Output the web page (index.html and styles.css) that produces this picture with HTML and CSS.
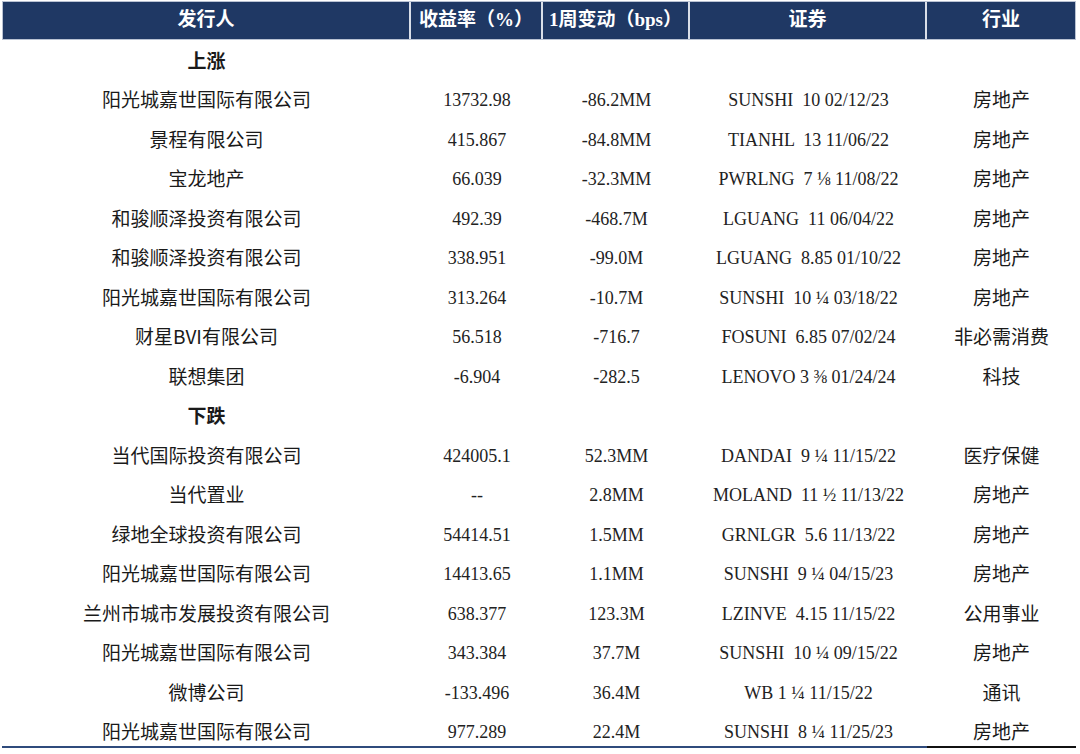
FILE: index.html
```html
<!DOCTYPE html>
<html lang="zh">
<head>
<meta charset="utf-8">
<title>发行人收益率变动</title>
<link rel="stylesheet" href="styles.css">
</head>
<body>
<div class="table">
  <div class="row head">
    <div class="cell c1">发行人</div>
    <div class="cell c2">收益率（%）</div>
    <div class="cell c3">1周变动（bps）</div>
    <div class="cell c4">证券</div>
    <div class="cell c5">行业</div>
  </div>
  <div class="body">
    <div class="row"><div class="cell c1 sect">上涨</div><div class="cell c2"></div><div class="cell c3"></div><div class="cell c4"></div><div class="cell c5"></div></div>
    <div class="row"><div class="cell c1">阳光城嘉世国际有限公司</div><div class="cell c2 num">13732.98</div><div class="cell c3 num">-86.2MM</div><div class="cell c4 num">SUNSHI  10 02/12/23</div><div class="cell c5">房地产</div></div>
    <div class="row"><div class="cell c1">景程有限公司</div><div class="cell c2 num">415.867</div><div class="cell c3 num">-84.8MM</div><div class="cell c4 num">TIANHL  13 11/06/22</div><div class="cell c5">房地产</div></div>
    <div class="row"><div class="cell c1">宝龙地产</div><div class="cell c2 num">66.039</div><div class="cell c3 num">-32.3MM</div><div class="cell c4 num">PWRLNG  7 ⅛ 11/08/22</div><div class="cell c5">房地产</div></div>
    <div class="row"><div class="cell c1">和骏顺泽投资有限公司</div><div class="cell c2 num">492.39</div><div class="cell c3 num">-468.7M</div><div class="cell c4 num">LGUANG  11 06/04/22</div><div class="cell c5">房地产</div></div>
    <div class="row"><div class="cell c1">和骏顺泽投资有限公司</div><div class="cell c2 num">338.951</div><div class="cell c3 num">-99.0M</div><div class="cell c4 num">LGUANG  8.85 01/10/22</div><div class="cell c5">房地产</div></div>
    <div class="row"><div class="cell c1">阳光城嘉世国际有限公司</div><div class="cell c2 num">313.264</div><div class="cell c3 num">-10.7M</div><div class="cell c4 num">SUNSHI  10 ¼ 03/18/22</div><div class="cell c5">房地产</div></div>
    <div class="row"><div class="cell c1">财星BVI有限公司</div><div class="cell c2 num">56.518</div><div class="cell c3 num">-716.7</div><div class="cell c4 num">FOSUNI  6.85 07/02/24</div><div class="cell c5">非必需消费</div></div>
    <div class="row"><div class="cell c1">联想集团</div><div class="cell c2 num">-6.904</div><div class="cell c3 num">-282.5</div><div class="cell c4 num">LENOVO 3 ⅜ 01/24/24</div><div class="cell c5">科技</div></div>
    <div class="row"><div class="cell c1 sect">下跌</div><div class="cell c2"></div><div class="cell c3"></div><div class="cell c4"></div><div class="cell c5"></div></div>
    <div class="row"><div class="cell c1">当代国际投资有限公司</div><div class="cell c2 num">424005.1</div><div class="cell c3 num">52.3MM</div><div class="cell c4 num">DANDAI  9 ¼ 11/15/22</div><div class="cell c5">医疗保健</div></div>
    <div class="row"><div class="cell c1">当代置业</div><div class="cell c2 num">--</div><div class="cell c3 num">2.8MM</div><div class="cell c4 num">MOLAND  11 ½ 11/13/22</div><div class="cell c5">房地产</div></div>
    <div class="row"><div class="cell c1">绿地全球投资有限公司</div><div class="cell c2 num">54414.51</div><div class="cell c3 num">1.5MM</div><div class="cell c4 num">GRNLGR  5.6 11/13/22</div><div class="cell c5">房地产</div></div>
    <div class="row"><div class="cell c1">阳光城嘉世国际有限公司</div><div class="cell c2 num">14413.65</div><div class="cell c3 num">1.1MM</div><div class="cell c4 num">SUNSHI  9 ¼ 04/15/23</div><div class="cell c5">房地产</div></div>
    <div class="row"><div class="cell c1">兰州市城市发展投资有限公司</div><div class="cell c2 num">638.377</div><div class="cell c3 num">123.3M</div><div class="cell c4 num">LZINVE  4.15 11/15/22</div><div class="cell c5">公用事业</div></div>
    <div class="row"><div class="cell c1">阳光城嘉世国际有限公司</div><div class="cell c2 num">343.384</div><div class="cell c3 num">37.7M</div><div class="cell c4 num">SUNSHI  10 ¼ 09/15/22</div><div class="cell c5">房地产</div></div>
    <div class="row"><div class="cell c1">微博公司</div><div class="cell c2 num">-133.496</div><div class="cell c3 num">36.4M</div><div class="cell c4 num">WB 1 ¼ 11/15/22</div><div class="cell c5">通讯</div></div>
    <div class="row last"><div class="cell c1">阳光城嘉世国际有限公司</div><div class="cell c2 num">977.289</div><div class="cell c3 num">22.4M</div><div class="cell c4 num">SUNSHI  8 ¼ 11/25/23</div><div class="cell c5">房地产</div></div>
  </div>
</div>
</body>
</html>
```

FILE: styles.css
```css
html, body {
  margin: 0;
  padding: 0;
  background: #ffffff;
}

body {
  width: 1080px;
  height: 754px;
  overflow: hidden;
  font-family: "Noto Sans CJK SC", "Noto Sans", sans-serif;
  color: #1a1a1a;
}

.table {
  padding: 1px 4px 0 2px;
}

.row {
  display: grid;
  grid-template-columns: 409px 132px 147px 237px 149px;
}

.cell {
  text-align: center;
  white-space: pre;
  font-size: 19px;
  line-height: 36px;
  height: 39.47px;
}

.num {
  font-family: "Liberation Serif", "Noto Sans CJK SC", serif;
  font-size: 18px;
  line-height: 39.47px;
  color: #222222;
}

.sect {
  font-weight: 700;
}

.head {
  background: #1f3864;
  border-top: 1px solid #b9c2d3;
  border-bottom: 1px solid #b9c2d3;
}

.head .cell {
  height: 37px;
  line-height: 36px;
  color: #ffffff;
  font-weight: 700;
  font-size: 19px;
  font-family: "Liberation Serif", "Noto Sans CJK SC", serif;
  border-right: 2px solid #d9dee8;
}

.head .cell.c5 {
  border-right: 1px solid #b9c2d3;
}

.head .cell.c1 {
  border-left: 1px solid #b9c2d3;
}

.body {
  margin-top: 2px;
}

.row.last .cell {
  height: 33.5px;
  border-bottom: 2px solid #2f4b7c;
  box-sizing: content-box;
  overflow: visible;
}

.row.last .cell.c5 {
  border-bottom-color: #111111;
}
```
